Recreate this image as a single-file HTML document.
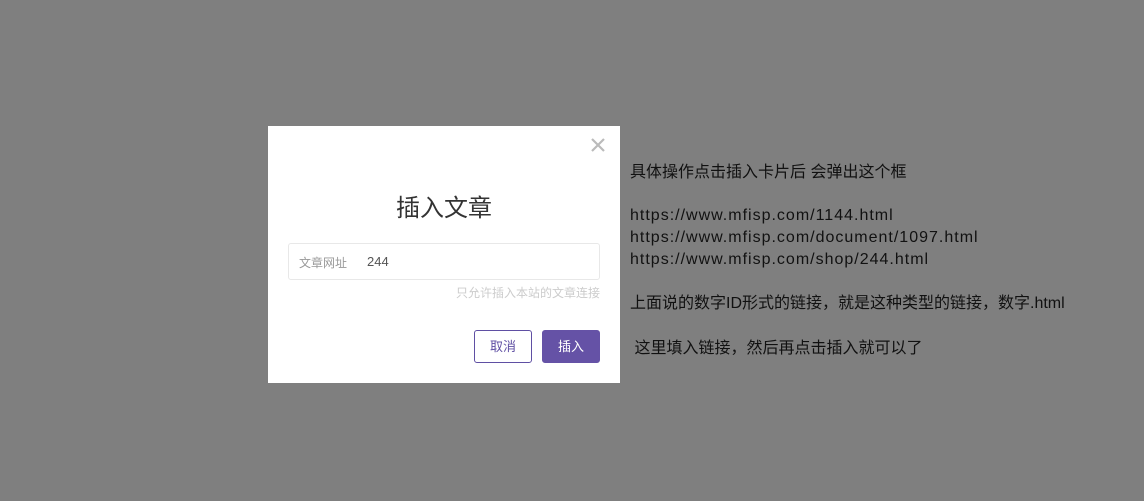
<!DOCTYPE html>
<html><head><meta charset="utf-8"><style>
body{margin:0;width:1144px;height:501px;background:#7f7f7f;position:relative;overflow:hidden;font-family:"Liberation Sans","Noto Sans CJK SC",sans-serif}
.d{position:absolute;left:268px;top:126px;width:352px;height:257px;background:#fff}
.x{position:absolute;left:589px;top:136px;width:18px;height:18px}
.t{position:absolute;left:268px;width:352px;top:188px;text-align:center;font-size:24px;color:#333}
.in{position:absolute;left:288px;top:243px;width:310px;height:35px;border:1px solid #e8e8e8;border-radius:3px;font-size:12px;color:#999}
.in span{position:absolute;left:10px;top:10px}
.in b{position:absolute;left:78px;top:10px;font-weight:normal;color:#555;font-size:13px}
.h{position:absolute;right:544px;top:284px;font-size:12px;color:#ccc}
.b{position:absolute;top:330px;width:58px;height:33px;box-sizing:border-box;border-radius:3px;font-size:13px;text-align:center;line-height:31px}
.r{position:absolute;left:630px;font-size:16px;color:#111;line-height:22px}
.u{letter-spacing:1px}
</style></head><body>
<div class="d"></div>
<svg class="x" viewBox="0 0 18 18"><path d="M3 3L15 15M15 3L3 15" stroke="#bbb" stroke-width="2.2"/></svg>
<div class="t">插入文章</div>
<div class="in"><span>文章网址</span><b>244</b></div>
<div class="h">只允许插入本站的文章连接</div>
<div class="b" style="left:474px;border:1px solid #5f4fa3;color:#5f4fa3">取消</div>
<div class="b" style="left:542px;background:#6552a6;color:#fff;border:1px solid #6552a6">插入</div>
<div class="r" style="top:162px">具体操作点击插入卡片后 会弹出这个框</div>
<div class="r u" style="top:205px">https://www.mfisp.com/1144.html<br>https://www.mfisp.com/document/1097.html<br>https://www.mfisp.com/shop/244.html</div>
<div class="r" style="top:293px">上面说的数字ID形式的链接，就是这种类型的链接，数字.html</div>
<div class="r" style="top:338px">&nbsp;这里填入链接，然后再点击插入就可以了</div>
</body></html>
